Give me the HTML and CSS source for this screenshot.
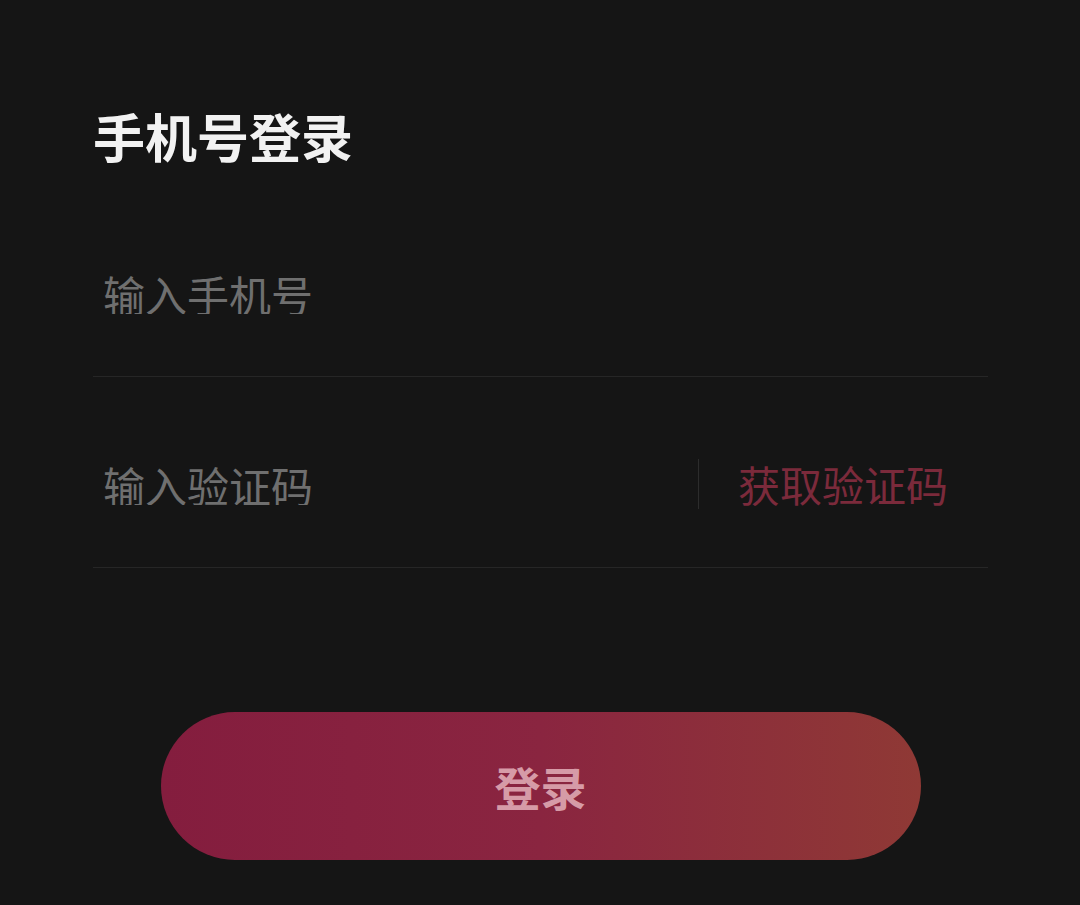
FILE: index.html
```html
<!DOCTYPE html>
<html lang="zh-CN">
<head>
  <meta charset="UTF-8" />
  <title>手机号登录</title>
  <link rel="stylesheet" href="styles.css">
</head>
<body>
  <div class="login">
    <h1>手机号登录</h1>

    <div class="field">
      <input type="tel" placeholder="输入手机号" />
    </div>

    <div class="field code-field">
      <input type="text" placeholder="输入验证码" />
      <span class="divider"></span>
      <span class="get-code">获取验证码</span>
    </div>

    <button class="login-btn">登录</button>
  </div>
</body>
</html>
```

FILE: styles.css
```css
* {
  box-sizing: border-box;
}

body {
  margin: 0;
  padding: 0;
  background-color: #151515;
  font-family: "Noto Sans CJK SC", "Noto Sans", sans-serif;
}

.login {
  padding: 110px 92px 0 93px;
}

h1 {
  margin: 0 0 24px 0;
  font-size: 52px;
  line-height: 52px;
  font-weight: 700;
  color: #f2f2f2;
}

.field {
  display: flex;
  align-items: center;
  padding: 86px 0 62px 0;
  border-bottom: 1px solid #262626;
}

.field input {
  flex: 1;
  min-width: 0;
  height: 42px;
  padding: 0 0 0 10px;
  border: none;
  outline: none;
  background: transparent;
  font-family: inherit;
  font-size: 42px;
  line-height: 42px;
  color: #d0d0d0;
}

.field input::placeholder {
  color: #6f6f6f;
}

.divider {
  width: 1px;
  height: 50px;
  margin: -4px 0;
  background-color: #2c2c2c;
}

.get-code {
  margin: 0 40px 0 39px;
  font-size: 42px;
  line-height: 42px;
  color: #7b2a3b;
}

.login-btn {
  display: block;
  width: 760px;
  height: 148px;
  margin: 144px auto 0 auto;
  padding: 0;
  border: none;
  border-radius: 74px;
  background: linear-gradient(90deg, #841d3e 0%, #8a2540 50%, #8f3935 100%);
  font-family: inherit;
  font-size: 46px;
  font-weight: 700;
  color: #d69ba7;
  cursor: pointer;
}
```
